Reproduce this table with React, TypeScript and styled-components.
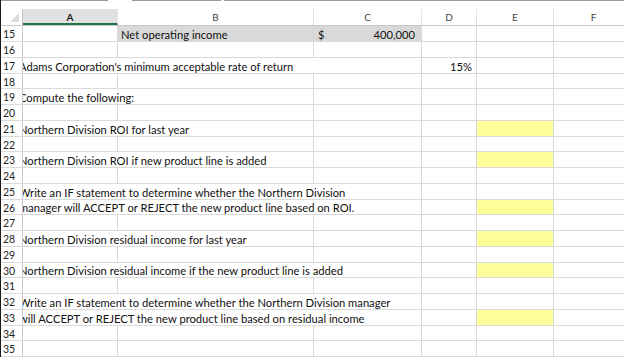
import styled, { createGlobalStyle } from "styled-components";

const GlobalStyle = createGlobalStyle`
  html, body {
    margin: 0;
    padding: 0;
    background: #ffffff;
  }
  body {
    font-family: Lato, "Open Sans", "Liberation Sans", sans-serif;
  }
`;

const COLS = "22px 95px 196px 108px 55px 77px 80px";
const GRID = "#dadada";

const Window = styled.div`
  width: 623px;
  height: 357px;
  overflow: hidden;
  border-left: 1px solid #1a1a1a;
  background: #fff;
`;

const TopStrip = styled.div`
  display: flex;
  height: 9px;
`;

const TopSegment = styled.div<{ $w: number; $gap?: boolean }>`
  width: ${(p) => p.$w}px;
  flex: ${(p) => (p.$w === 0 ? 1 : "none")};
  border-top: 1px solid ${(p) => (p.$gap ? "transparent" : "#9b9b9b")};
`;

const HeaderRow = styled.div`
  display: grid;
  grid-template-columns: ${COLS};
  height: 17px;
  border-bottom: 1px solid #c8c8c8;
  box-sizing: border-box;
`;

const Corner = styled.div`
  position: relative;
  border-right: 1px solid #c8c8c8;
  &::after {
    content: "";
    position: absolute;
    right: 3px;
    bottom: 3px;
    border-style: solid;
    border-width: 0 0 9px 9px;
    border-color: transparent transparent #dcdcdc transparent;
  }
`;

const ColHead = styled.div<{ $active?: boolean }>`
  display: flex;
  align-items: center;
  justify-content: center;
  font-size: 10px;
  color: ${(p) => (p.$active ? "#1f1f1f" : "#444")};
  font-weight: ${(p) => (p.$active ? 700 : 400)};
  background: ${(p) => (p.$active ? "#e1e1e1" : "#fff")};
  border-right: 1px solid #e3e3e3;
  box-sizing: border-box;
  ${(p) => (p.$active ? "border-bottom: 2px solid #217346; padding-top: 2px;" : "")}
`;

const Row = styled.div<{ $h: number }>`
  display: grid;
  grid-template-columns: ${COLS};
  height: ${(p) => p.$h}px;
`;

const RowNum = styled.div`
  font-size: 10.5px;
  color: #222;
  padding: 1px 0 0 2px;
  display: flex;
  align-items: center;
  border-right: 1px solid #c8c8c8;
  border-bottom: 1px solid ${GRID};
  box-sizing: border-box;
`;

const Cell = styled.div<{
  $span?: number;
  $fill?: string;
  $align?: "left" | "right";
}>`
  grid-column: span ${(p) => p.$span ?? 1};
  display: flex;
  align-items: center;
  justify-content: ${(p) => (p.$align === "right" ? "flex-end" : "flex-start")};
  padding: ${(p) => (p.$align === "right" ? "1px 4px 0 0" : "1px 0 0 3px")};
  background: ${(p) => p.$fill ?? "transparent"};
  border-right: 1px solid ${GRID};
  border-bottom: 1px solid ${GRID};
  box-sizing: border-box;
  overflow: hidden;
  white-space: nowrap;
  font-size: 11.2px;
  color: #111;
`;

// text starting in column A is scrolled a few px under the row headers
const ClippedText = styled.span`
  margin-left: -7px;
`;

const Split = styled.div`
  flex: 1;
  display: flex;
  justify-content: space-between;
`;

const Accounting = styled.span`
  width: 103px;
  display: flex;
  justify-content: space-between;
  padding-right: 6px;
  box-sizing: border-box;
`;

type CellDef = {
  span?: number;
  text?: string;
  align?: "left" | "right";
  fill?: string;
  clip?: boolean;
  dollar?: string;
};

const YELLOW = "#ffff99";
const GRAY = "#d9d9d9";

const blank: CellDef[] = [{}, {}, {}, {}, {}, {}];
const question = (text: string, span: number, yellow: boolean): CellDef[] => [
  { span, text, clip: true },
  ...Array.from({ length: 3 - span }, () => ({})),
  {},
  yellow ? { fill: YELLOW } : {},
  {},
];

const rows: { n: number; cells: CellDef[] }[] = [
  {
    n: 15,
    cells: [{}, { span: 2, fill: GRAY, text: "Net operating income", dollar: "400,000" }, {}, {}, {}],
  },
  { n: 16, cells: blank },
  {
    n: 17,
    cells: [
      { span: 3, text: "Adams Corporation's minimum acceptable rate of return", clip: true },
      { text: "15%", align: "right" },
      {},
      {},
    ],
  },
  { n: 18, cells: blank },
  { n: 19, cells: question("Compute the following:", 2, false) },
  { n: 20, cells: blank },
  { n: 21, cells: question("Northern Division ROI for last year", 2, true) },
  { n: 22, cells: blank },
  { n: 23, cells: question("Northern Division ROI if new product line is added", 2, true) },
  { n: 24, cells: blank },
  {
    n: 25,
    cells: question("Write an IF statement to determine whether the Northern Division", 3, false),
  },
  {
    n: 26,
    cells: question("manager will ACCEPT or REJECT the new product line based on ROI.", 3, true),
  },
  { n: 27, cells: blank },
  { n: 28, cells: question("Northern Division residual income for last year", 2, true) },
  { n: 29, cells: blank },
  {
    n: 30,
    cells: question("Northern Division residual income if the new product line is added", 3, true),
  },
  { n: 31, cells: blank },
  {
    n: 32,
    cells: question(
      "Write an IF statement to determine whether the Northern Division manager",
      3,
      false
    ),
  },
  {
    n: 33,
    cells: question("will ACCEPT or REJECT the new product line based on residual income", 3, true),
  },
  { n: 34, cells: blank },
  { n: 35, cells: blank },
  { n: 36, cells: blank },
];

const heights = [16, 16, 16, 15, 16, 16, 16, 15, 16, 16, 16, 15, 16, 16, 16, 15, 16, 16, 16, 15, 16, 16];

function renderCell(c: CellDef, i: number) {
  if (c.dollar) {
    return (
      <Cell key={i} $span={c.span} $fill={c.fill}>
        <Split>
          <span>{c.text}</span>
          <Accounting>
            <span>$</span>
            <span>{c.dollar}</span>
          </Accounting>
        </Split>
      </Cell>
    );
  }
  return (
    <Cell key={i} $span={c.span} $fill={c.fill} $align={c.align}>
      {c.clip ? <ClippedText>{c.text}</ClippedText> : c.text}
    </Cell>
  );
}

export default function App() {
  return (
    <>
      <GlobalStyle />
      <Window>
        <TopStrip>
          <TopSegment $w={107} />
          <TopSegment $w={24} $gap />
          <TopSegment $w={89} />
          <TopSegment $w={3} $gap />
          <TopSegment $w={0} />
        </TopStrip>
        <HeaderRow>
          <Corner />
          <ColHead $active>A</ColHead>
          <ColHead>B</ColHead>
          <ColHead>C</ColHead>
          <ColHead>D</ColHead>
          <ColHead>E</ColHead>
          <ColHead>F</ColHead>
        </HeaderRow>
        {rows.map((r, idx) => (
          <Row key={r.n} $h={heights[idx]}>
            <RowNum>{r.n}</RowNum>
            {r.cells.map(renderCell)}
          </Row>
        ))}
      </Window>
    </>
  );
}
